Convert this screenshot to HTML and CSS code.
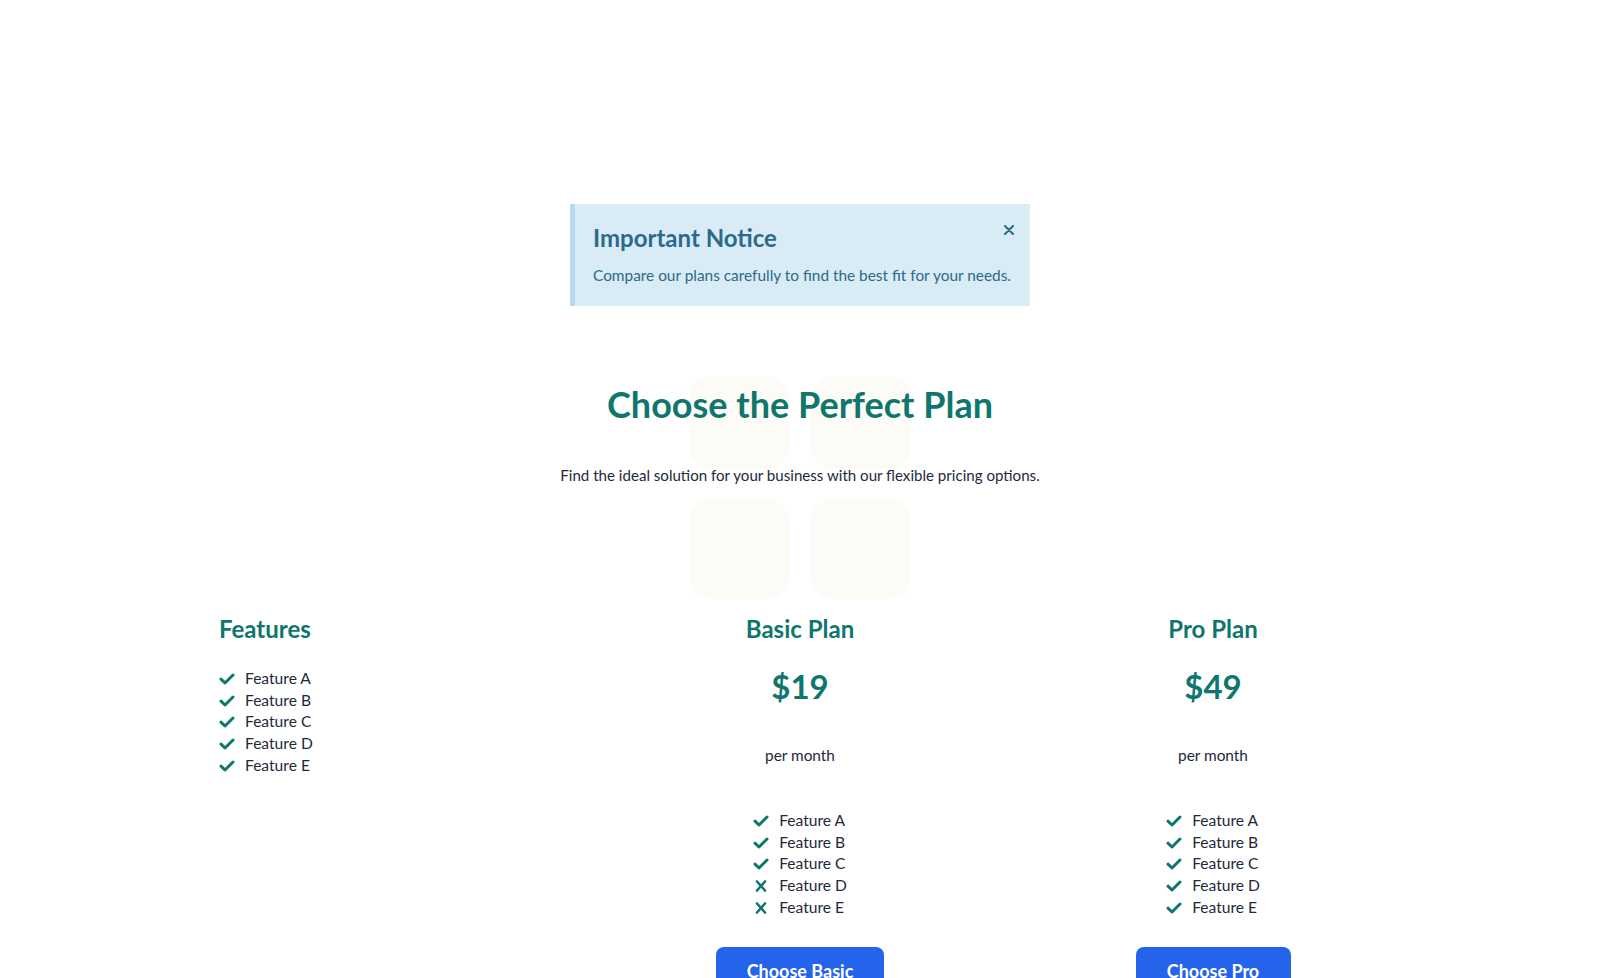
FILE: index.html
```html
<!DOCTYPE html>
<html lang="en">
<head>
<meta charset="utf-8">
<title>Pricing</title>
<link rel="stylesheet" href="styles.css">
</head>
<body>
<div class="page">
  <div class="notice">
    <button class="notice-close" aria-label="Close">
      <svg viewBox="0 0 10 10" width="10" height="10"><path d="M1 1L9 9M9 1L1 9" stroke="currentColor" stroke-width="2" stroke-linecap="round"/></svg>
    </button>
    <h2 class="notice-title">Important Notice</h2>
    <p class="notice-text">Compare our plans carefully to find the best fit for your needs.</p>
  </div>

  <section class="hero">
    <div class="deco">
      <span class="tile tile-short"></span><span class="tile tile-short"></span>
      <span class="tile"></span><span class="tile"></span>
    </div>
    <h1 class="hero-title">Choose the Perfect Plan</h1>
    <p class="hero-sub">Find the ideal solution for your business with our flexible pricing options.</p>
  </section>

  <section class="plans">
    <div class="col col-features">
      <h3 class="col-title">Features</h3>
      <ul class="flist">
        <li><svg class="ic" viewBox="0 0 16 12"><polyline points="2,6.2 6,10 14,2" /></svg>Feature A</li>
        <li><svg class="ic" viewBox="0 0 16 12"><polyline points="2,6.2 6,10 14,2" /></svg>Feature B</li>
        <li><svg class="ic" viewBox="0 0 16 12"><polyline points="2,6.2 6,10 14,2" /></svg>Feature C</li>
        <li><svg class="ic" viewBox="0 0 16 12"><polyline points="2,6.2 6,10 14,2" /></svg>Feature D</li>
        <li><svg class="ic" viewBox="0 0 16 12"><polyline points="2,6.2 6,10 14,2" /></svg>Feature E</li>
      </ul>
    </div>
    <div class="col col-plan">
      <h3 class="col-title">Basic Plan</h3>
      <div class="price">$19</div>
      <div class="per">per month</div>
      <ul class="flist">
        <li><svg class="ic" viewBox="0 0 16 12"><polyline points="2,6.2 6,10 14,2" /></svg>Feature A</li>
        <li><svg class="ic" viewBox="0 0 16 12"><polyline points="2,6.2 6,10 14,2" /></svg>Feature B</li>
        <li><svg class="ic" viewBox="0 0 16 12"><polyline points="2,6.2 6,10 14,2" /></svg>Feature C</li>
        <li><svg class="ic ic-x" viewBox="0 0 16 12"><path d="M4 1.5L12 10.5M12 1.5L4 10.5" /></svg>Feature D</li>
        <li><svg class="ic ic-x" viewBox="0 0 16 12"><path d="M4 1.5L12 10.5M12 1.5L4 10.5" /></svg>Feature E</li>
      </ul>
      <button class="btn btn-basic">Choose Basic</button>
    </div>
    <div class="col col-plan col-pro">
      <h3 class="col-title">Pro Plan</h3>
      <div class="price">$49</div>
      <div class="per">per month</div>
      <ul class="flist">
        <li><svg class="ic" viewBox="0 0 16 12"><polyline points="2,6.2 6,10 14,2" /></svg>Feature A</li>
        <li><svg class="ic" viewBox="0 0 16 12"><polyline points="2,6.2 6,10 14,2" /></svg>Feature B</li>
        <li><svg class="ic" viewBox="0 0 16 12"><polyline points="2,6.2 6,10 14,2" /></svg>Feature C</li>
        <li><svg class="ic" viewBox="0 0 16 12"><polyline points="2,6.2 6,10 14,2" /></svg>Feature D</li>
        <li><svg class="ic" viewBox="0 0 16 12"><polyline points="2,6.2 6,10 14,2" /></svg>Feature E</li>
      </ul>
      <button class="btn btn-pro">Choose Pro</button>
    </div>
  </section>
</div>
</body>
</html>
```

FILE: styles.css
```css
* { box-sizing: border-box; }
html, body { margin: 0; padding: 0; background: #ffffff; }
body {
  font-family: "Lato", "Noto Sans", sans-serif;
  color: #1e293b;
  overflow: hidden;
  height: 978px;
}
.page { padding-top: 204px; }

.notice {
  position: relative;
  width: 460px;
  margin: 0 auto;
  background: #d9ecf6;
  border-left: 5px solid #b6dbf0;
  padding: 19px 10px 20px 18px;
  color: #2b6a8b;
}
.notice-title {
  margin: 0;
  font-size: 24px;
  line-height: 29px;
  font-weight: 700;
}
.notice-text {
  margin: 12px 0 0;
  font-size: 15.4px;
  line-height: 22px;
  white-space: nowrap;
}
.notice-close {
  position: absolute;
  top: 21px;
  right: 16px;
  border: 0;
  background: transparent;
  padding: 0;
  color: #2b6a8b;
  display: flex;
  cursor: pointer;
}

.hero {
  position: relative;
  text-align: center;
  padding-top: 76px;
}
.deco {
  position: absolute;
  left: 50%;
  top: 70px;
  width: 222px;
  margin-left: -111px;
  display: grid;
  grid-template-columns: 100px 100px;
  column-gap: 22px;
  row-gap: 30px;
  align-items: start;
}
.tile {
  display: block;
  height: 100px;
  border-radius: 22px;
  background: #fcfbf5;
}
.tile-short { height: 93px; }
.hero-title {
  position: relative;
  margin: 0;
  font-size: 36px;
  line-height: 44px;
  font-weight: 700;
  color: #0f766e;
}
.hero-sub {
  position: relative;
  margin: 38px 0 0;
  font-size: 15.1px;
  line-height: 22px;
  color: #1e293b;
}

.plans {
  display: grid;
  grid-template-columns: 381px 400px 426px;
  margin-left: 219px;
  margin-top: 128px;
}
.col-title {
  margin: 0;
  font-size: 24px;
  line-height: 29px;
  font-weight: 700;
  color: #0f766e;
}
.col-plan {
  display: flex;
  flex-direction: column;
  align-items: center;
}
.price {
  margin-top: 24px;
  font-size: 33px;
  line-height: 38px;
  font-weight: 700;
  color: #0f766e;
}
.per {
  margin-top: 39px;
  font-size: 15.4px;
  line-height: 22px;
}
.flist {
  list-style: none;
  margin: 25px 0 0;
  padding: 0;
}
.col-plan .flist { margin-top: 44px; }
.flist li {
  display: flex;
  align-items: center;
  gap: 10px;
  font-size: 15.6px;
  line-height: 21.7px;
  white-space: nowrap;
}
.ic {
  width: 16px;
  height: 12px;
  flex: none;
  fill: none;
  stroke: #0f766e;
  stroke-width: 3;
  stroke-linecap: round;
  stroke-linejoin: round;
}
.ic-x { stroke-width: 2.6; }

.btn {
  margin-top: 28px;
  border: 0;
  border-radius: 8px;
  background: #2563eb;
  color: #ffffff;
  font-family: inherit;
  font-size: 18px;
  font-weight: 700;
  line-height: 24px;
  padding: 12px 0;
  white-space: nowrap;
  text-align: center;
}
.btn-basic { width: 168px; }
.btn-pro { width: 155px; }
```
